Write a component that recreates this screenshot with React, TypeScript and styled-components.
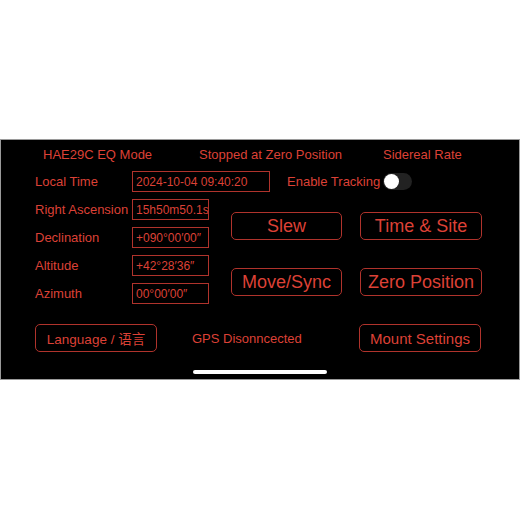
import styled, { createGlobalStyle } from 'styled-components';

const RED = '#dc4136';
const RED_LINE = '#b0332c';

const GlobalStyle = createGlobalStyle`
  html, body {
    margin: 0;
    padding: 0;
    background: #fff;
  }
  body {
    font-family: 'Liberation Sans', Arial, 'Noto Sans CJK SC', sans-serif;
  }
`;

const status = ['HAE29C EQ Mode', 'Stopped at Zero Position', 'Sidereal Rate'];

const coords = [
  { label: 'Right Ascension', value: '15h50m50.1s' },
  { label: 'Declination', value: '+090°00′00″' },
  { label: 'Altitude', value: '+42°28′36″' },
  { label: 'Azimuth', value: '00°00′00″' },
];

const actions = ['Slew', 'Time & Site', 'Move/Sync', 'Zero Position'];

export default function App() {
  return (
    <>
      <GlobalStyle />
      <Page>
        <Panel>
          <StatusBar>
            {status.map((s) => (
              <StatusText key={s}>{s}</StatusText>
            ))}
          </StatusBar>

          <TimeRow>
            <Label>Local Time</Label>
            <ValueBox $width={138}>2024-10-04 09:40:20</ValueBox>
            <TrackingLabel>Enable Tracking</TrackingLabel>
            <Switch>
              <Knob />
            </Switch>
          </TimeRow>

          <Middle>
            <CoordList>
              {coords.map((c) => (
                <Row key={c.label}>
                  <Label>{c.label}</Label>
                  <ValueBox $width={77}>{c.value}</ValueBox>
                </Row>
              ))}
            </CoordList>
            <ActionGrid>
              {actions.map((a) => (
                <ActionButton key={a}>{a}</ActionButton>
              ))}
            </ActionGrid>
          </Middle>

          <Footer>
            <SmallButton $size={13.5}>Language / 语言</SmallButton>
            <GpsText>GPS Disonncected</GpsText>
            <SmallButton $size={15}>Mount Settings</SmallButton>
          </Footer>

          <HomeIndicator />
        </Panel>
      </Page>
    </>
  );
}

const Page = styled.div`
  padding-top: 139px;
  height: 520px;
  box-sizing: border-box;
`;

const Panel = styled.div`
  height: 241px;
  box-sizing: border-box;
  background: #000;
  border: 1px solid #9a9a9a;
  padding: 4px 38px 0 34px;
  display: flex;
  flex-direction: column;
  color: ${RED};
`;

const StatusBar = styled.div`
  display: grid;
  grid-template-columns: 156px 184px auto;
  margin-left: 8px;
  height: 20px;
  align-items: center;
`;

const StatusText = styled.span`
  font-size: 13px;
  white-space: nowrap;
`;

const Row = styled.div`
  display: flex;
  align-items: center;
  height: 21px;
  & + & {
    margin-top: 7px;
  }
`;

const TimeRow = styled(Row)`
  margin-top: 7px;
`;

const Label = styled.span`
  width: 97px;
  font-size: 13px;
  white-space: nowrap;
`;

const ValueBox = styled.div<{ $width: number }>`
  width: ${(p) => p.$width}px;
  height: 21px;
  box-sizing: border-box;
  border: 1.5px solid ${RED_LINE};
  padding: 0 3px;
  display: flex;
  align-items: center;
  font-size: 12px;
  white-space: nowrap;
  overflow: hidden;
`;

const TrackingLabel = styled.span`
  margin-left: 17px;
  font-size: 13px;
  white-space: nowrap;
`;

const Switch = styled.div`
  margin-left: 3px;
  width: 29px;
  height: 17px;
  border-radius: 9px;
  background: #222;
  display: flex;
  align-items: center;
  padding: 0 1px;
  box-sizing: border-box;
`;

const Knob = styled.div`
  width: 15px;
  height: 15px;
  border-radius: 50%;
  background: #fff;
`;

const Middle = styled.div`
  display: flex;
  margin-top: 7px;
`;

const CoordList = styled.div`
  display: flex;
  flex-direction: column;
`;

const ActionGrid = styled.div`
  display: grid;
  grid-template-columns: 111px 122px;
  grid-auto-rows: 28px;
  column-gap: 18px;
  row-gap: 28px;
  margin: 13px 0 0 22px;
`;

const ActionButton = styled.button`
  box-sizing: border-box;
  background: transparent;
  border: 1.5px solid ${RED_LINE};
  border-radius: 5px;
  color: ${RED};
  font-family: inherit;
  font-size: 18px;
  padding: 0;
  white-space: nowrap;
`;

const Footer = styled.div`
  display: flex;
  align-items: center;
  margin-top: 20px;
  height: 28px;
`;

const SmallButton = styled(ActionButton)<{ $size: number }>`
  width: 122px;
  height: 28px;
  font-size: ${(p) => p.$size}px;
  &:last-child {
    margin-left: auto;
  }
`;

const GpsText = styled.span`
  margin-left: 35px;
  font-size: 13px;
`;

const HomeIndicator = styled.div`
  align-self: center;
  margin: 18px 0 0 4px;
  width: 134px;
  height: 4px;
  border-radius: 2px;
  background: #fff;
`;
